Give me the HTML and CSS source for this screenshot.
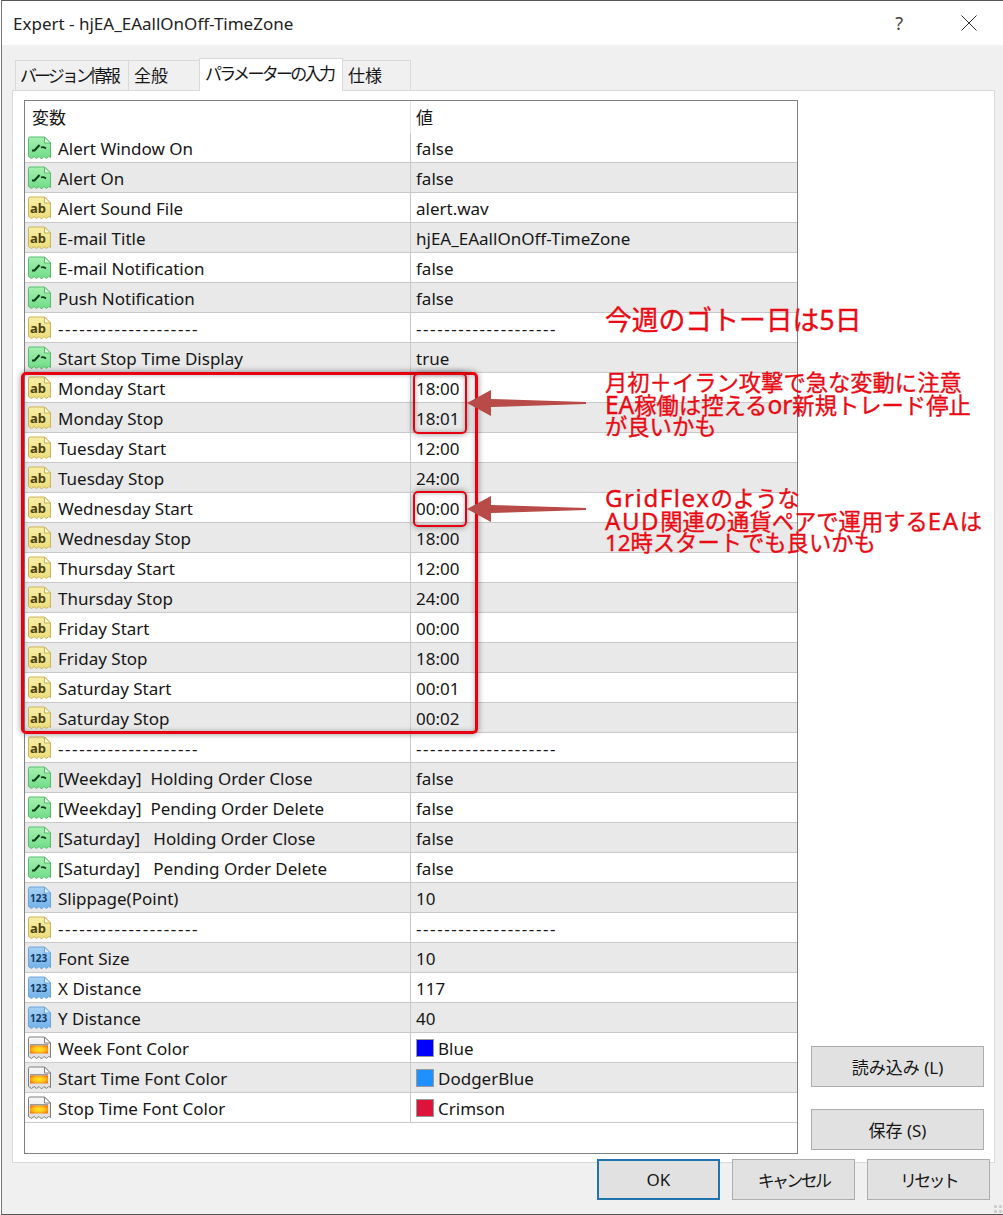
FILE: index.html
```html
<!DOCTYPE html>
<html lang="ja">
<head>
<meta charset="utf-8">
<title>Expert - hjEA_EAallOnOff-TimeZone</title>
<link rel="stylesheet" href="styles.css">
</head>
<body>
<svg class="defs" width="0" height="0" aria-hidden="true">
  <defs>
    <linearGradient id="g-green" x1="0" y1="0" x2="0" y2="1"><stop offset="0" stop-color="#a6f0b2"/><stop offset="1" stop-color="#6edc84"/></linearGradient>
    <linearGradient id="g-yellow" x1="0" y1="0" x2="0" y2="1"><stop offset="0" stop-color="#f8eea8"/><stop offset="1" stop-color="#ecdc78"/></linearGradient>
    <linearGradient id="g-blue" x1="0" y1="0" x2="0" y2="1"><stop offset="0" stop-color="#a8d2f4"/><stop offset="1" stop-color="#70b0e8"/></linearGradient>
    <linearGradient id="g-white" x1="0" y1="0" x2="0" y2="1"><stop offset="0" stop-color="#f8f8f8"/><stop offset="1" stop-color="#dcdcdc"/></linearGradient>
    <radialGradient id="g-fire" cx=".5" cy=".5" r=".6"><stop offset="0" stop-color="#ffe81a"/><stop offset=".55" stop-color="#ffc21a"/><stop offset="1" stop-color="#f0780f"/></radialGradient>
    <path id="page" d="M1.500 2.500Q1.500 1 3 1H17.500L23.500 7V21.500L21.500 20.500 19.500 22.500 17 20.500 14.500 23 12 20.500 9.500 22.500 7 20.500 4.500 22.500 1.500 20.500Z"/>
    <symbol id="i-bool" viewBox="0 0 25 24">
      <use href="#page" fill="url(#g-green)" stroke="#58bc6e"/>
      <path d="M17.500 1V7H23.500Z" fill="#e6fbe9" stroke="#58bc6e"/>
      <path d="M5 14.500H7.500L12.500 9" fill="none" stroke="#0f3a1b" stroke-width="2"/>
      <path d="M14 11.500Q16 10.500 19 12.500" fill="none" stroke="#0f3a1b" stroke-width="1.800"/>
    </symbol>
    <symbol id="i-str" viewBox="0 0 25 24">
      <use href="#page" fill="url(#g-yellow)" stroke="#c9b55a"/>
      <path d="M17.500 1V7H23.500Z" fill="#fffbe0" stroke="#c9b55a"/>
      <text x="3" y="16.500" class="ico-ab">ab</text>
    </symbol>
    <symbol id="i-num" viewBox="0 0 25 24">
      <use href="#page" fill="url(#g-blue)" stroke="#6aa6dc"/>
      <path d="M17.500 1V7H23.500Z" fill="#e4f2fd" stroke="#6aa6dc"/>
      <text x="3" y="16" class="ico-num">123</text>
    </symbol>
    <symbol id="i-col" viewBox="0 0 25 24">
      <use href="#page" fill="url(#g-white)" stroke="#808080"/>
      <path d="M17.500 1V7H23.500Z" fill="#ffffff" stroke="#808080"/>
      <rect x="3" y="8" width="18" height="1.500" fill="#9a9a9a"/>
      <rect x="3" y="9.500" width="18" height="8" fill="url(#g-fire)"/>
    </symbol>
  </defs>
</svg>

<div class="window">
  <header class="titlebar">
    <span class="title">Expert - hjEA_EAallOnOff-TimeZone</span>
    <span class="help">?</span>
    <svg class="close" width="16" height="16" viewBox="0 0 16 16"><path d="M.5 .5L15.500 15.500M15.500 .5L.5 15.500" stroke="#333" stroke-width="1" fill="none"/></svg>
  </header>

  <div class="dialog">
    <nav class="tabs">
      <span class="tab tab-version"><span class="kana kana-tight">バージョン情報</span></span>
      <span class="tab tab-general">全般</span>
      <span class="tab tab-active"><span class="kana">パラメーターの入力</span></span>
      <span class="tab tab-spec">仕様</span>
    </nav>

    <section class="panel">
      <div class="list">
        <div class="row head"><div class="name">変数</div><div class="val">値</div></div>
        <div class="row"><div class="name"><svg class="ico"><use href="#i-bool"/></svg>Alert Window On</div><div class="val">false</div></div>
        <div class="row"><div class="name"><svg class="ico"><use href="#i-bool"/></svg>Alert On</div><div class="val">false</div></div>
        <div class="row"><div class="name"><svg class="ico"><use href="#i-str"/></svg>Alert Sound File</div><div class="val">alert.wav</div></div>
        <div class="row"><div class="name"><svg class="ico"><use href="#i-str"/></svg>E-mail Title</div><div class="val">hjEA_EAallOnOff-TimeZone</div></div>
        <div class="row"><div class="name"><svg class="ico"><use href="#i-bool"/></svg>E-mail Notification</div><div class="val">false</div></div>
        <div class="row"><div class="name"><svg class="ico"><use href="#i-bool"/></svg>Push Notification</div><div class="val">false</div></div>
        <div class="row"><div class="name"><svg class="ico"><use href="#i-str"/></svg><span class="dash">--------------------</span></div><div class="val"><span class="dash">--------------------</span></div></div>
        <div class="row"><div class="name"><svg class="ico"><use href="#i-bool"/></svg>Start Stop Time Display</div><div class="val">true</div></div>
        <div class="row"><div class="name"><svg class="ico"><use href="#i-str"/></svg>Monday Start</div><div class="val">18:00</div></div>
        <div class="row"><div class="name"><svg class="ico"><use href="#i-str"/></svg>Monday Stop</div><div class="val">18:01</div></div>
        <div class="row"><div class="name"><svg class="ico"><use href="#i-str"/></svg>Tuesday Start</div><div class="val">12:00</div></div>
        <div class="row"><div class="name"><svg class="ico"><use href="#i-str"/></svg>Tuesday Stop</div><div class="val">24:00</div></div>
        <div class="row"><div class="name"><svg class="ico"><use href="#i-str"/></svg>Wednesday Start</div><div class="val">00:00</div></div>
        <div class="row"><div class="name"><svg class="ico"><use href="#i-str"/></svg>Wednesday Stop</div><div class="val">18:00</div></div>
        <div class="row"><div class="name"><svg class="ico"><use href="#i-str"/></svg>Thursday Start</div><div class="val">12:00</div></div>
        <div class="row"><div class="name"><svg class="ico"><use href="#i-str"/></svg>Thursday Stop</div><div class="val">24:00</div></div>
        <div class="row"><div class="name"><svg class="ico"><use href="#i-str"/></svg>Friday Start</div><div class="val">00:00</div></div>
        <div class="row"><div class="name"><svg class="ico"><use href="#i-str"/></svg>Friday Stop</div><div class="val">18:00</div></div>
        <div class="row"><div class="name"><svg class="ico"><use href="#i-str"/></svg>Saturday Start</div><div class="val">00:01</div></div>
        <div class="row"><div class="name"><svg class="ico"><use href="#i-str"/></svg>Saturday Stop</div><div class="val">00:02</div></div>
        <div class="row"><div class="name"><svg class="ico"><use href="#i-str"/></svg><span class="dash">--------------------</span></div><div class="val"><span class="dash">--------------------</span></div></div>
        <div class="row"><div class="name"><svg class="ico"><use href="#i-bool"/></svg>[Weekday]&nbsp; Holding Order Close</div><div class="val">false</div></div>
        <div class="row"><div class="name"><svg class="ico"><use href="#i-bool"/></svg>[Weekday]&nbsp; Pending Order Delete</div><div class="val">false</div></div>
        <div class="row"><div class="name"><svg class="ico"><use href="#i-bool"/></svg>[Saturday]&nbsp;&nbsp; Holding Order Close</div><div class="val">false</div></div>
        <div class="row"><div class="name"><svg class="ico"><use href="#i-bool"/></svg>[Saturday]&nbsp;&nbsp; Pending Order Delete</div><div class="val">false</div></div>
        <div class="row"><div class="name"><svg class="ico"><use href="#i-num"/></svg>Slippage(Point)</div><div class="val">10</div></div>
        <div class="row"><div class="name"><svg class="ico"><use href="#i-str"/></svg><span class="dash">--------------------</span></div><div class="val"><span class="dash">--------------------</span></div></div>
        <div class="row"><div class="name"><svg class="ico"><use href="#i-num"/></svg>Font Size</div><div class="val">10</div></div>
        <div class="row"><div class="name"><svg class="ico"><use href="#i-num"/></svg>X Distance</div><div class="val">117</div></div>
        <div class="row"><div class="name"><svg class="ico"><use href="#i-num"/></svg>Y Distance</div><div class="val">40</div></div>
        <div class="row"><div class="name"><svg class="ico"><use href="#i-col"/></svg>Week Font Color</div><div class="val"><i class="swatch swatch-blue"></i>Blue</div></div>
        <div class="row"><div class="name"><svg class="ico"><use href="#i-col"/></svg>Start Time Font Color</div><div class="val"><i class="swatch swatch-dodger"></i>DodgerBlue</div></div>
        <div class="row"><div class="name"><svg class="ico"><use href="#i-col"/></svg>Stop Time Font Color</div><div class="val"><i class="swatch swatch-crimson"></i>Crimson</div></div>
      </div>
      <div class="side">
        <button class="btn btn-side">読み込み (L)</button>
        <button class="btn btn-side">保存 (S)</button>
      </div>
    </section>

    <footer class="footer">
      <button class="btn btn-foot btn-default">OK</button>
      <button class="btn btn-foot"><span class="kana">キャンセル</span></button>
      <button class="btn btn-foot"><span class="kana">リセット</span></button>
    </footer>
  </div>

  <div class="mark mark-big"></div>
  <div class="mark mark-mon"></div>
  <div class="mark mark-wed"></div>
  <svg class="arrow arrow-mon" width="120" height="28" viewBox="0 0 120 28"><path d="M0 14L24 1V10L119 13V15L24 18V27Z" fill="#b84a48"/></svg>
  <svg class="arrow arrow-wed" width="120" height="28" viewBox="0 0 120 28"><path d="M0 14L24 1V10L119 13V15L24 18V27Z" fill="#b84a48"/></svg>
  <p class="note note-goto">今週のゴトー日は5日</p>
  <p class="note note-mon">月初＋イラン攻撃で急な変動に注意<br><span class="lat">EA</span>稼働は控える<span class="lat">or</span>新規トレード停止<br>が良いかも</p>
  <p class="note note-wed"><span class="lat-wide">GridFlex</span>のような<br><span class="lat-wide">AUD</span>関連の通貨ペアで運用する<span class="lat-wide">EA</span>は<br>12時スタートでも良いかも</p>
  <svg class="grip" width="8" height="8" viewBox="0 0 8 8"><path d="M0 0h3v3H0zM5 0h3v3H5zM0 5h3v3H0zM5 5h3v3H5z" fill="#cfcfcf"/></svg>
</div>
</body>
</html>
```

FILE: styles.css
```css
* { box-sizing: border-box; }
html, body { margin: 0; padding: 0; background: #fff; }
body {
  width: 1003px;
  height: 1215px;
  overflow: hidden;
  font-family: "Noto Sans", "Noto Sans CJK JP", sans-serif;
  font-size: 17px;
  color: #161616;
}
.defs { position: absolute; }
.ico-ab { font: bold 13px "Noto Sans", sans-serif; fill: #4a4212; }
.ico-num { font: bold 10px "Noto Sans", sans-serif; fill: #123a66; }

.window {
  position: relative;
  width: 1002px;
  height: 1215px;
  margin-left: 1px;
  border-top: 1px solid #555;
  border-left: 1px solid #777;
  border-bottom: 1px solid #555;
  display: flex;
  flex-direction: column;
}
.titlebar {
  height: 44px;
  flex: none;
  background: #fff;
  display: flex;
  align-items: center;
  padding: 0 26px 0 11px;
}
.title { font-size: 17px; flex: 1; color: #222; }
.help { font-size: 18px; color: #444; margin-right: 58px; }

.dialog {
  flex: 1;
  min-height: 0;
  background: #f0f0f0;
  padding: 13px 8px 0 10px;
  display: flex;
  flex-direction: column;
}
.tabs { height: 32px; flex: none; display: flex; align-items: flex-end; padding-left: 3px; }
.tab {
  height: 30px;
  background: #f0f0f0;
  border: 1px solid #d9d9d9;
  border-bottom: 0;
  margin-right: -1px;
  font-size: 17px;
  line-height: 30px;
  padding-left: 5px;
  white-space: nowrap;
}
.kana { letter-spacing: -2.700px; }
.kana-tight { letter-spacing: -3px; margin-left: -1px; }
.tab-version { width: 114px; }
.tab-general { width: 72px; }
.tab-active { width: 144px; height: 33px; background: #fff; line-height: 30px; position: relative; margin-bottom: -1px; }
.tab-spec { width: 69px; }

.panel {
  height: 1073px;
  flex: none;
  background: #fff;
  border: 1px solid #d9d9d9;
  padding: 9px 9px 8px 11px;
  display: flex;
}
.list {
  width: 774px;
  flex: none;
  border: 1px solid #808080;
  background: #fff;
}
.row {
  height: 30px;
  display: grid;
  grid-template-columns: 386px 1fr;
  border-bottom: 1px solid #c9c9c9;
  line-height: 29px;
  white-space: nowrap;
}
.row:nth-child(odd) { background: #e9e9e9; }
.row.head { height: 32px; background: #fff; border-bottom: 0; }
.name {
  display: flex;
  align-items: center;
  border-right: 1px solid #c9c9c9;
  white-space: pre;
  padding-top: 1px;
}
.head .name { padding-left: 7px; border-right-color: #e4e4e4; }
.val { padding: 1px 0 0 5px; display: flex; align-items: center; }
.dash { letter-spacing: 1.580px; }
.ico { width: 25px; height: 24px; margin: -2px 6px 0 2px; flex: none; }
.swatch { width: 18px; height: 18px; margin: -1px 4px 0 0; flex: none; border: 1px solid #9a9a9a; }
.swatch-blue { background: #0000ff; }
.swatch-dodger { background: #1e90ff; }
.swatch-crimson { background: #dc143c; }

.side {
  width: 173px;
  margin-left: 13px;
  padding-bottom: 4px;
  display: flex;
  flex-direction: column;
  justify-content: flex-end;
  gap: 22px;
}
.btn {
  font: inherit;
  color: #161616;
  background: #e1e1e1;
  border: 1px solid #adadad;
  padding: 0;
  height: 41px;
}
.footer {
  flex: none;
  margin-top: -4px;
  display: flex;
  gap: 12px;
  padding-left: 585px;
  position: relative;
}
.btn-foot { width: 123px; }
.btn-default { border: 2px solid #1f74ad; }

.mark { position: absolute; border: 2px solid #e60012; border-radius: 5px; box-shadow: 0 0 6px rgba(0,0,0,.45), inset 0 0 5px rgba(0,0,0,.3); }
.mark-big { left: 19px; top: 371px; width: 457px; height: 362px; border-width: 3px; }
.mark-mon { left: 411px; top: 372px; width: 54px; height: 61px; }
.mark-wed { left: 411px; top: 490px; width: 54px; height: 36px; }
.arrow { position: absolute; left: 465px; }
.arrow-mon { top: 388px; }
.arrow-wed { top: 494px; }
.note {
  position: absolute;
  margin: 0;
  left: 603px;
  color: #ea0a14;
  font-size: 22.300px;
  line-height: 21.500px;
  white-space: nowrap;
  -webkit-text-stroke: 0.35px #ea0a14;
}
.lat { font-size: 24.500px; }
.lat-wide { font-size: 24px; letter-spacing: 1.600px; }
.note-goto { top: 304px; font-size: 26.800px; line-height: 30px; }
.note-mon { top: 371px; }
.note-wed { top: 486px; }
.grip { position: absolute; right: 1px; bottom: 1px; }
```
